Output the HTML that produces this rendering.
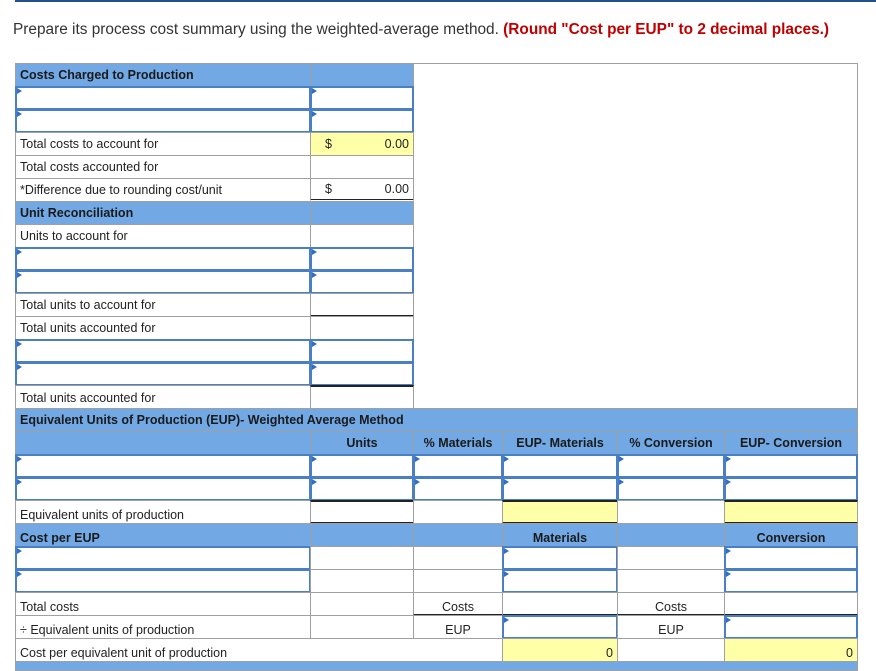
<!DOCTYPE html>
<html><head><meta charset="utf-8"><style>
body{margin:0;width:876px;height:667px;background:#fff;position:relative;overflow:hidden;font-family:"Liberation Sans",Arial,sans-serif;color:#222}
.t{position:absolute;left:13px;top:21px;font-size:15.4px;white-space:nowrap;color:#333}
.t b{color:#c00000}
.c{position:absolute;box-sizing:border-box;border:1px solid #a0a0a0;background:#fff;font-size:12.5px;line-height:23px;padding:0 4px;white-space:nowrap;overflow:hidden}
.h{background:#72a9e5;font-weight:bold;color:#1a1a1a}
.y{background:#ffffa8}
.i{border:2px solid #4a7fc4;background:#fff}
.i:before{content:"";position:absolute;left:0;top:0;border-left:5px solid #2f6fc8;border-top:3px solid transparent;border-bottom:3px solid transparent}
.ctr{text-align:center}.r{text-align:right}
.dl{border-bottom:3px double #222}
</style></head><body>
<div style="position:absolute;left:15px;top:0;width:861px;height:2px;background:#24508f"></div>
<div class="t">Prepare its process cost summary using the weighted-average method. <b>(Round "Cost per EUP" to 2 decimal places.)</b></div>
<div style="position:absolute;left:413px;top:63px;width:445px;height:346px;box-sizing:border-box;border:1px solid #a0a0a0;border-left:none"></div>

<div class="c h" style="left:15px;top:63px;width:296px;height:24px">Costs Charged to Production</div>
<div class="c h" style="left:310px;top:63px;width:104px;height:24px"></div>
<div class="c i" style="left:15px;top:86px;width:296px;height:24px"></div>
<div class="c i" style="left:310px;top:86px;width:104px;height:24px"></div>
<div class="c i" style="left:15px;top:109px;width:296px;height:24px"></div>
<div class="c i" style="left:310px;top:109px;width:104px;height:24px"></div>
<div class="c" style="left:15px;top:132px;width:296px;height:24px">Total costs to account for</div>
<div class="c y" style="left:310px;top:132px;width:104px;height:24px"><span style="margin-left:10px">$</span><span style="float:right">0.00</span></div>
<div class="c" style="left:15px;top:155px;width:296px;height:24px">Total costs accounted for</div>
<div class="c" style="left:310px;top:155px;width:104px;height:24px"></div>
<div class="c" style="left:15px;top:178px;width:296px;height:24px">*Difference due to rounding cost/unit</div>
<div class="c dl" style="left:310px;top:178px;width:104px;height:24px;line-height:21px"><span style="margin-left:10px">$</span><span style="float:right">0.00</span></div>
<div class="c h" style="left:15px;top:201px;width:296px;height:24px">Unit Reconciliation</div>
<div class="c h" style="left:310px;top:201px;width:104px;height:24px"></div>
<div class="c" style="left:15px;top:224px;width:296px;height:24px">Units to account for</div>
<div class="c" style="left:310px;top:224px;width:104px;height:24px"></div>
<div class="c i" style="left:15px;top:247px;width:296px;height:24px"></div>
<div class="c i" style="left:310px;top:247px;width:104px;height:24px"></div>
<div class="c i" style="left:15px;top:270px;width:296px;height:24px"></div>
<div class="c i" style="left:310px;top:270px;width:104px;height:24px"></div>
<div class="c" style="left:15px;top:293px;width:296px;height:24px">Total units to account for</div>
<div class="c" style="left:310px;top:293px;width:104px;height:24px;border-bottom:2px solid #222"></div>
<div class="c" style="left:15px;top:316px;width:296px;height:24px">Total units accounted for</div>
<div class="c" style="left:310px;top:316px;width:104px;height:24px"></div>
<div class="c i" style="left:15px;top:339px;width:296px;height:24px"></div>
<div class="c i" style="left:310px;top:339px;width:104px;height:24px"></div>
<div class="c i" style="left:15px;top:362px;width:296px;height:24px"></div>
<div class="c i" style="left:310px;top:362px;width:104px;height:24px"></div>
<div class="c" style="left:15px;top:385px;width:296px;height:24px;line-height:25px">Total units accounted for</div>
<div class="c" style="left:310px;top:385px;width:104px;height:24px;border-top:2px solid #222"></div>

<div class="c h" style="left:15px;top:408px;width:843px;height:24px">Equivalent Units of Production (EUP)- Weighted Average Method</div>
<div class="c h" style="left:15px;top:431px;width:296px;height:24px"></div>
<div class="c h ctr" style="left:310px;top:431px;width:104px;height:24px">Units</div>
<div class="c h ctr" style="left:413px;top:431px;width:90px;height:24px;padding:0">% Materials</div>
<div class="c h ctr" style="left:502px;top:431px;width:116px;height:24px;padding:0">EUP- Materials</div>
<div class="c h ctr" style="left:617px;top:431px;width:108px;height:24px;padding:0">% Conversion</div>
<div class="c h ctr" style="left:724px;top:431px;width:134px;height:24px;padding:0">EUP- Conversion</div>

<div class="c i" style="left:15px;top:454px;width:296px;height:24px"></div>
<div class="c i" style="left:310px;top:454px;width:104px;height:24px"></div>
<div class="c i" style="left:413px;top:454px;width:90px;height:24px"></div>
<div class="c i" style="left:502px;top:454px;width:116px;height:24px"></div>
<div class="c i" style="left:617px;top:454px;width:108px;height:24px"></div>
<div class="c i" style="left:724px;top:454px;width:134px;height:24px"></div>
<div class="c i" style="left:15px;top:477px;width:296px;height:24px"></div>
<div class="c i" style="left:310px;top:477px;width:104px;height:24px"></div>
<div class="c i" style="left:413px;top:477px;width:90px;height:24px"></div>
<div class="c i" style="left:502px;top:477px;width:116px;height:24px"></div>
<div class="c i" style="left:617px;top:477px;width:108px;height:24px"></div>
<div class="c i" style="left:724px;top:477px;width:134px;height:24px"></div>

<div class="c" style="left:15px;top:500px;width:296px;height:24px;line-height:29px">Equivalent units of production</div>
<div class="c" style="left:310px;top:500px;width:104px;height:24px;border-top:2px solid #222;border-bottom:2px solid #222"></div>
<div class="c" style="left:413px;top:500px;width:90px;height:24px"></div>
<div class="c y" style="left:502px;top:500px;width:116px;height:24px;border-top:2px solid #222;border-bottom:2px solid #222"></div>
<div class="c" style="left:617px;top:500px;width:108px;height:24px"></div>
<div class="c y" style="left:724px;top:500px;width:134px;height:24px;border-top:2px solid #222;border-bottom:2px solid #222"></div>

<div class="c h" style="left:15px;top:523px;width:296px;height:24px;line-height:28px">Cost per EUP</div>
<div class="c h" style="left:310px;top:523px;width:104px;height:24px"></div>
<div class="c h" style="left:413px;top:523px;width:90px;height:24px"></div>
<div class="c h ctr" style="left:502px;top:523px;width:116px;height:24px;line-height:28px">Materials</div>
<div class="c h" style="left:617px;top:523px;width:108px;height:24px"></div>
<div class="c h ctr" style="left:724px;top:523px;width:134px;height:24px;line-height:28px">Conversion</div>

<div class="c i" style="left:15px;top:546px;width:296px;height:24px"></div>
<div class="c" style="left:310px;top:546px;width:104px;height:24px"></div>
<div class="c" style="left:413px;top:546px;width:90px;height:24px"></div>
<div class="c i" style="left:502px;top:546px;width:116px;height:24px"></div>
<div class="c" style="left:617px;top:546px;width:108px;height:24px"></div>
<div class="c i" style="left:724px;top:546px;width:134px;height:24px"></div>
<div class="c i" style="left:15px;top:569px;width:296px;height:24px"></div>
<div class="c" style="left:310px;top:569px;width:104px;height:24px"></div>
<div class="c" style="left:413px;top:569px;width:90px;height:24px"></div>
<div class="c i" style="left:502px;top:569px;width:116px;height:24px"></div>
<div class="c" style="left:617px;top:569px;width:108px;height:24px"></div>
<div class="c i" style="left:724px;top:569px;width:134px;height:24px"></div>

<div class="c" style="left:15px;top:592px;width:296px;height:24px;line-height:29px">Total costs</div>
<div class="c" style="left:310px;top:592px;width:104px;height:24px"></div>
<div class="c ctr" style="left:413px;top:592px;width:90px;height:24px;line-height:29px;border-bottom:2px solid #222">Costs</div>
<div class="c" style="left:502px;top:592px;width:116px;height:24px;border-bottom:2px solid #222"></div>
<div class="c ctr" style="left:617px;top:592px;width:108px;height:24px;line-height:29px;border-bottom:2px solid #222">Costs</div>
<div class="c" style="left:724px;top:592px;width:134px;height:24px;border-bottom:2px solid #222"></div>
<div class="c" style="left:15px;top:615px;width:296px;height:24px;line-height:29px">÷ Equivalent units of production</div>
<div class="c" style="left:310px;top:615px;width:104px;height:24px"></div>
<div class="c ctr" style="left:413px;top:615px;width:90px;height:24px;line-height:29px">EUP</div>
<div class="c i" style="left:502px;top:615px;width:116px;height:24px"></div>
<div class="c ctr" style="left:617px;top:615px;width:108px;height:24px;line-height:29px">EUP</div>
<div class="c i" style="left:724px;top:615px;width:134px;height:24px"></div>
<div class="c" style="left:15px;top:638px;width:488px;height:24px;line-height:29px">Cost per equivalent unit of production</div>
<div class="c y r" style="left:502px;top:638px;width:116px;height:24px;line-height:29px">0</div>
<div class="c" style="left:617px;top:638px;width:108px;height:24px"></div>
<div class="c y r" style="left:724px;top:638px;width:134px;height:24px;line-height:29px">0</div>
<div class="c h" style="left:15px;top:661px;width:843px;height:10px"></div>
</body></html>
